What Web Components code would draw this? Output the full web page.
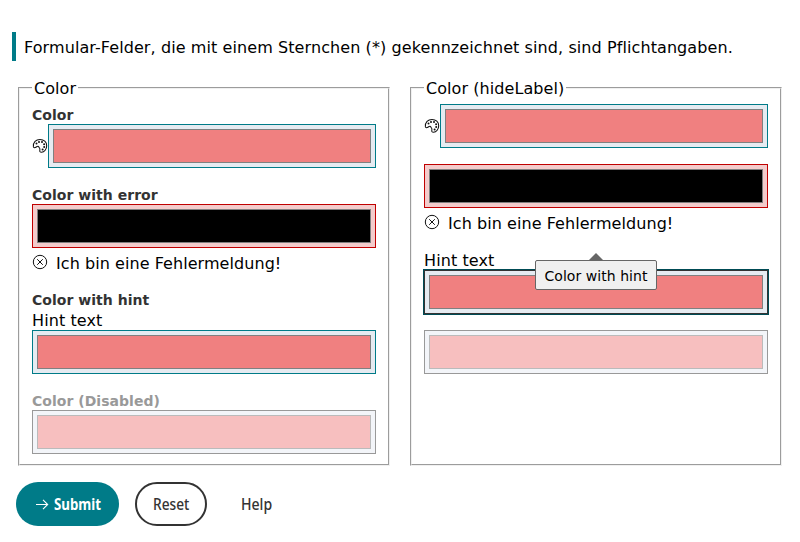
<!DOCTYPE html>
<html lang="de">
<head>
<meta charset="utf-8">
<title>Color inputs</title>
<style>
body{margin:0;background:#fff;color:#000;font:16px/20px "DejaVu Sans",Verdana,sans-serif}
</style>
</head>
<body>
<color-form></color-form>
<script>
const define=(name,html,setup)=>customElements.define(name,class extends HTMLElement{
  connectedCallback(){
    if(this.shadowRoot)return;
    const t=document.createElement('template');
    t.innerHTML=html;
    this.attachShadow({mode:'open'}).append(t.content.cloneNode(true));
    if(setup)setup(this,this.shadowRoot);
  }
});

define('form-notice',`<style>
:host{display:block;box-sizing:border-box;height:29px;border-left:4px solid #007b88;padding:6px 0 0 8px;white-space:nowrap;letter-spacing:.088px}
</style><slot></slot>`);

define('field-group',`<style>
:host{display:block}
fieldset{box-sizing:border-box;height:388px;margin:0;border:2px groove #f0f0f0;padding:6px 12px 10px;min-width:0}
legend{padding:0 2px;height:20px;line-height:21px;white-space:nowrap;letter-spacing:.07px}
.fields{display:flex;flex-direction:column;gap:16px}
</style><fieldset><legend></legend><div class="fields"><slot></slot></div></fieldset>`,
(el,r)=>{r.querySelector('legend').textContent=el.getAttribute('legend')});

define('palette-icon',`<style>
:host{display:block;width:16px;height:16px}svg{display:block}
</style><svg width="16" height="16" viewBox="0 0 16 16" fill="none" stroke="#111" stroke-width="1.05" stroke-linejoin="round" stroke-linecap="round">
<path d="M1.4 8.900C.9 4.400 4 1.400 8 1.400c3.900 0 6.700 2.700 6.700 6.300 0 3.400-2.300 6.600-5.200 6.600-1.500 0-1.900-.8-1.700-1.900.2-.9.4-1.900-.4-2.500-.5-.4-.4-1.500-1.300-1.700-1-.2-1.300.6-2.200 1.100-.9.5-2.200.7-2.500-.4Z"/>
<g fill="#111" stroke="none"><circle cx="4.500" cy="5.400" r="1"/><circle cx="7" cy="3.900" r="1"/><circle cx="10" cy="4.100" r="1"/><circle cx="12.100" cy="6.200" r="1"/><circle cx="12.200" cy="9" r="1"/><circle cx="10.600" cy="11.600" r="1"/></g></svg>`);

define('error-icon',`<style>
:host{display:block;width:16px;height:16px}svg{display:block}
</style><svg width="16" height="16" viewBox="0 0 16 16" fill="none" stroke="#111" stroke-width="1"><circle cx="8" cy="8" r="6.700"/><path d="M5.200 5.200l5.600 5.600M10.800 5.200l-5.600 5.600"/></svg>`);

define('color-field',`<style>
:host{display:block;position:relative}
.label{height:20px;line-height:23px;font-size:14px;font-weight:700;color:#333;white-space:nowrap;letter-spacing:.03px}
:host([hint]) .label{line-height:21px}
.hint{height:20px;line-height:21px;letter-spacing:.1px}
.row{display:flex;align-items:center}
.box{flex:1;box-sizing:border-box;height:44px;padding:4px;border:1px solid #007b88;background:#e6ebf1}
.swatch{box-sizing:border-box;height:34px;border:1px solid #808080;background:#f08080}
.error{display:flex;height:26px;gap:8px;padding-top:6px;box-sizing:border-box;white-space:nowrap;letter-spacing:.06px}
:host([error]) .box{border-color:#c00000;background:#f3cccc}
:host([error]) .swatch{background:#000}
:host([focused]) .box{border-color:#333;box-shadow:0 0 0 1px #004b55}
:host([disabled]) .label{color:#999}
:host([disabled]) .box{border-color:#999;background:#f3f5f9}
:host([disabled]) .swatch{border-color:#bbb;background:#f7bfbf}
.error span{line-height:20px}
</style><div class="body"></div><slot></slot>`,
(el,r)=>{
  const add=(parent,tag,cls,text)=>{const n=document.createElement(tag);if(cls)n.className=cls;if(text)n.textContent=text;parent.append(n);return n};
  const body=r.querySelector('.body'),a=n=>el.getAttribute(n);
  if(a('label'))add(body,'div','label',a('label'));
  if(a('hint'))add(body,'div','hint',a('hint'));
  const row=add(body,'div','row');
  if(el.hasAttribute('icon'))add(row,'palette-icon');
  add(add(row,'div','box'),'div','swatch');
  if(a('error')){const e=add(body,'div','error');add(e,'error-icon');add(e,'span','',a('error'))}
});

define('tool-tip',`<style>
:host{position:absolute;left:111px;top:10px;z-index:2;box-sizing:border-box;width:122px;height:30px;border:1px solid #666;border-radius:2px;background:#f0f0f0;font-size:14px;line-height:30px;text-align:center;white-space:nowrap;letter-spacing:.05px}
:host::before{content:"";position:absolute;left:53px;top:-8px;border:7px solid transparent;border-top:0;border-bottom-color:#666}
</style><slot></slot>`);

define('pill-button',`<style>
:host{display:flex;align-items:center;justify-content:center;box-sizing:border-box;height:44px;width:var(--w);border-radius:22px;color:#333;font:500 16px/20px "Noto Sans",sans-serif}
:host([kind=primary]){background:#007b88;color:#fff;font-weight:700;gap:5px}
:host([kind=outline]){border:2px solid #333}
span{display:block;width:var(--tw);transform:scaleX(var(--sx,1));transform-origin:0 50%;white-space:nowrap}
svg{display:none}:host([kind=primary]) svg{display:block}
</style><svg width="14" height="14" viewBox="0 0 14 14" fill="none" stroke="currentColor" stroke-width="1.100"><path d="M1 7.500h11.700M8 2.800l4.700 4.700L8 12.200"/></svg><span><slot></slot></span>`);

define('color-form',`<style>
:host{display:block;padding:32px 18px 0 12px}
.groups{display:grid;grid-template-columns:372px 372px;gap:20px;margin:17px 0 0 6px}
.actions{display:flex;gap:16px;margin:16px 0 0 4px}
</style>
<form-notice>Formular-Felder, die mit einem Sternchen (*) gekennzeichnet sind, sind Pflichtangaben.</form-notice>
<div class="groups">
<field-group legend="Color">
<color-field label="Color" icon></color-field>
<color-field label="Color with error" error="Ich bin eine Fehlermeldung!"></color-field>
<color-field label="Color with hint" hint="Hint text"></color-field>
<color-field label="Color (Disabled)" disabled></color-field>
</field-group>
<field-group legend="Color (hideLabel)">
<color-field icon></color-field>
<color-field error="Ich bin eine Fehlermeldung!"></color-field>
<color-field hint="Hint text" focused><tool-tip>Color with hint</tool-tip></color-field>
<color-field disabled></color-field>
</field-group>
</div>
<div class="actions">
<pill-button kind="primary" style="--w:103px;--tw:47px;--sx:.83">Submit</pill-button>
<pill-button kind="outline" style="--w:72px;--tw:37px;--sx:.855">Reset</pill-button>
<pill-button style="--w:67px;--tw:32px;--sx:.88">Help</pill-button>
</div>`);
</script>
</body>
</html>
